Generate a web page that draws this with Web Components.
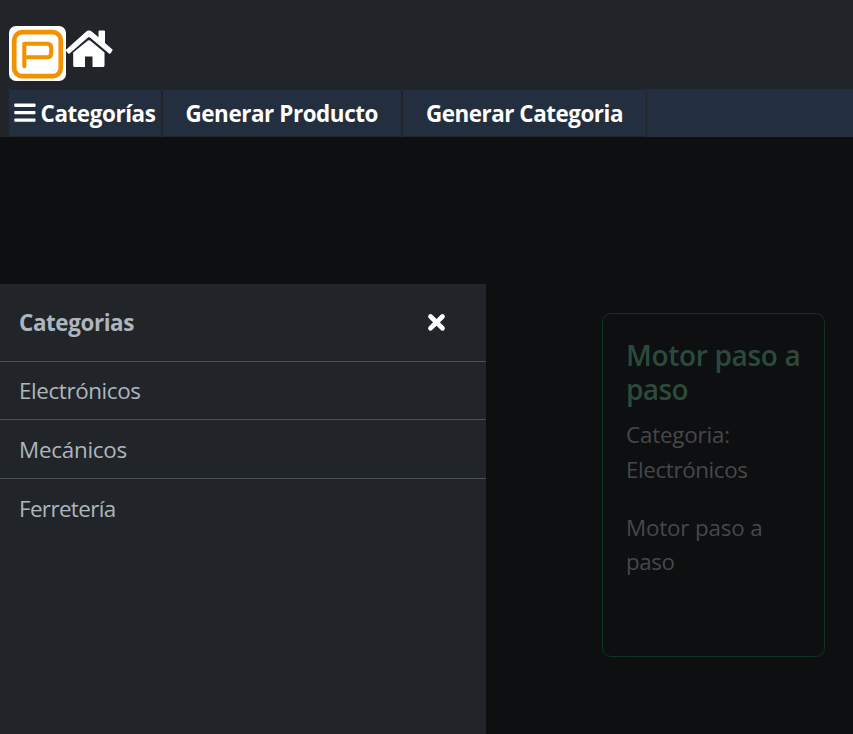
<!DOCTYPE html>
<html lang="es">
<head>
<meta charset="utf-8">
<title>Categorías</title>
<style>
html,body{margin:0;height:100%;overflow:hidden;background:#0e0f10}
body{font-family:"Open Sans","Noto Sans",sans-serif;font-size:22.4px}
</style>
</head>
<body>
<store-page></store-page>
<script>
function define(name, html, setup) {
  customElements.define(name, class extends HTMLElement {
    connectedCallback() {
      if (this.shadowRoot) return;
      this.attachShadow({mode: 'open'}).innerHTML = html;
      if (setup) setup(this);
    }
  });
}

/* One line of text, tracked so that it takes the given width. */
define('fit-line', `<style>:host{display:block;white-space:nowrap}span{display:inline-block}</style><span><slot></slot></span>`, el => {
  const span = el.shadowRoot.querySelector('span');
  const n = el.textContent.length;
  const natural = span.getBoundingClientRect().width;
  if (natural) span.style.letterSpacing = ((Number(el.getAttribute('width')) - natural) / n) + 'px';
});

define('brand-logo', `<style>:host{display:block;width:57px;height:55px}svg{display:block}</style>
<svg width="57" height="55" viewBox="0 0 57 55" fill="none"><rect width="57" height="55" rx="7" fill="#fff"/>
<rect x="5.2" y="6.2" width="46.600" height="44" rx="8" stroke="#f39200" stroke-width="4.700"/>
<path d="M15.300 40.300V17.700H38Q42.200 17.700 42.200 21.700V27.200Q42.200 31.200 38 31.200H16" stroke="#f39200" stroke-width="4.100" stroke-linecap="round" stroke-linejoin="round"/></svg>`);

define('home-icon', `<style>:host{display:block;width:47px;height:38px}svg{display:block}</style>
<svg width="47" height="38" viewBox="0 0 47 38" fill="#fff"><path d="M7.200 22.500V35.500q0 1.500 1.500 1.500H19V26.400H26.500V37H37q1.500 0 1.500-1.500V22.500L24.100 10.600q-1.100-.9-2.200 0Z"/>
<path d="M.3 19.500 20 1.700Q23-.8 26 1.700L32.500 7.200V1.500q0-1 1-1H38q1 0 1 1V12.900L46.200 19.300q.7.6.1 1.400L44.400 23.400q-.6.7-1.400.1L24 7.500q-1-.8-2 0L3.600 23.500q-.8.6-1.400-.1L.200 20.900q-.6-.8.100-1.400Z"/></svg>`);

define('menu-icon', `<style>:host{display:block}svg{display:block}</style>
<svg width="22" height="20" viewBox="0 0 22 20" fill="#fff"><rect x=".3" y=".5" width="21.200" height="3.400" rx=".7"/><rect x=".3" y="8" width="21.200" height="3.200" rx=".7"/><rect x=".3" y="15.400" width="21.200" height="3.400" rx=".7"/></svg>`);

define('close-icon', `<style>:host{display:block}svg{display:block}</style>
<svg width="19" height="19" viewBox="0 0 19 19"><path d="M3.500 3.500 15.500 15.300M15.500 3.500 3.500 15.300" stroke="#fff" stroke-width="4.700" stroke-linecap="round"/></svg>`);

define('nav-button', `<style>:host{display:flex;box-sizing:border-box;height:48px;border:1px solid #212529;border-radius:3px;background:#232f3e;color:#fff;font-weight:700;align-items:center;line-height:34px;padding-top:2px}</style><slot></slot>`);

define('top-bar', `<style>:host{display:block;height:137px;background:#212529}
.brand{display:flex;height:63px;padding:26px 0 0 9px;align-items:flex-start}
home-icon{margin-top:4px}
menu-icon{margin-bottom:2px}
nav{display:flex;height:48px;margin-left:8px;background:#232f3e}
.a{width:154px;padding-left:5px;gap:4.500px}.b{width:240px;padding-left:22.500px}.c{width:245px;padding-left:23px}</style>
<div class="brand"><brand-logo></brand-logo><home-icon></home-icon></div>
<nav><nav-button class="a"><menu-icon></menu-icon><fit-line width="115">Categorías</fit-line></nav-button><nav-button class="b"><fit-line width="192.500">Generar Producto</fit-line></nav-button><nav-button class="c"><fit-line width="197">Generar Categoria</fit-line></nav-button></nav>`);

define('category-item', `<style>:host{display:flex;box-sizing:border-box;align-items:center;height:59px;padding:1px 0 0 19px;border-top:1px solid #495057;line-height:34px}</style><slot></slot>`);

define('category-drawer', `<style>:host{display:block;width:486px;height:450px;background:#212529;color:#adb5bd}
header{display:flex;align-items:center;justify-content:space-between;height:77px;padding:0 40px 0 19px;font-weight:700}
.first{height:58px}</style>
<header><fit-line width="115">Categorias</fit-line><close-icon></close-icon></header>
<category-item class="first"><fit-line width="121.500">Electrónicos</fit-line></category-item>
<category-item><fit-line width="108">Mecánicos</fit-line></category-item>
<category-item><fit-line width="96.500">Ferretería</fit-line></category-item>`);

define('product-card', `<style>:host{display:block;box-sizing:border-box;width:223px;height:344px;margin-top:29px;border:1px solid #0a3622;border-radius:9px;padding:24px 0 0 23px;color:#45484b;line-height:34.500px}
h2{margin:0 0 11.500px;font-size:28px;line-height:34.400px;font-weight:600;color:#2c4a3c}
p{margin:0 0 23.500px}</style>
<h2><fit-line width="174.500">Motor paso a</fit-line><fit-line width="62">paso</fit-line></h2>
<p><fit-line width="104">Categoria:</fit-line><fit-line width="121.500">Electrónicos</fit-line></p>
<p><fit-line width="136.500">Motor paso a</fit-line><fit-line width="48.500">paso</fit-line></p>`);

define('store-page', `<style>:host{display:block;height:734px;background:#0e0f10}
main{display:flex;align-items:flex-start;justify-content:space-between;padding:147px 28px 0 0}</style>
<top-bar></top-bar><main><category-drawer></category-drawer><product-card></product-card></main>`);
</script>
</body>
</html>
